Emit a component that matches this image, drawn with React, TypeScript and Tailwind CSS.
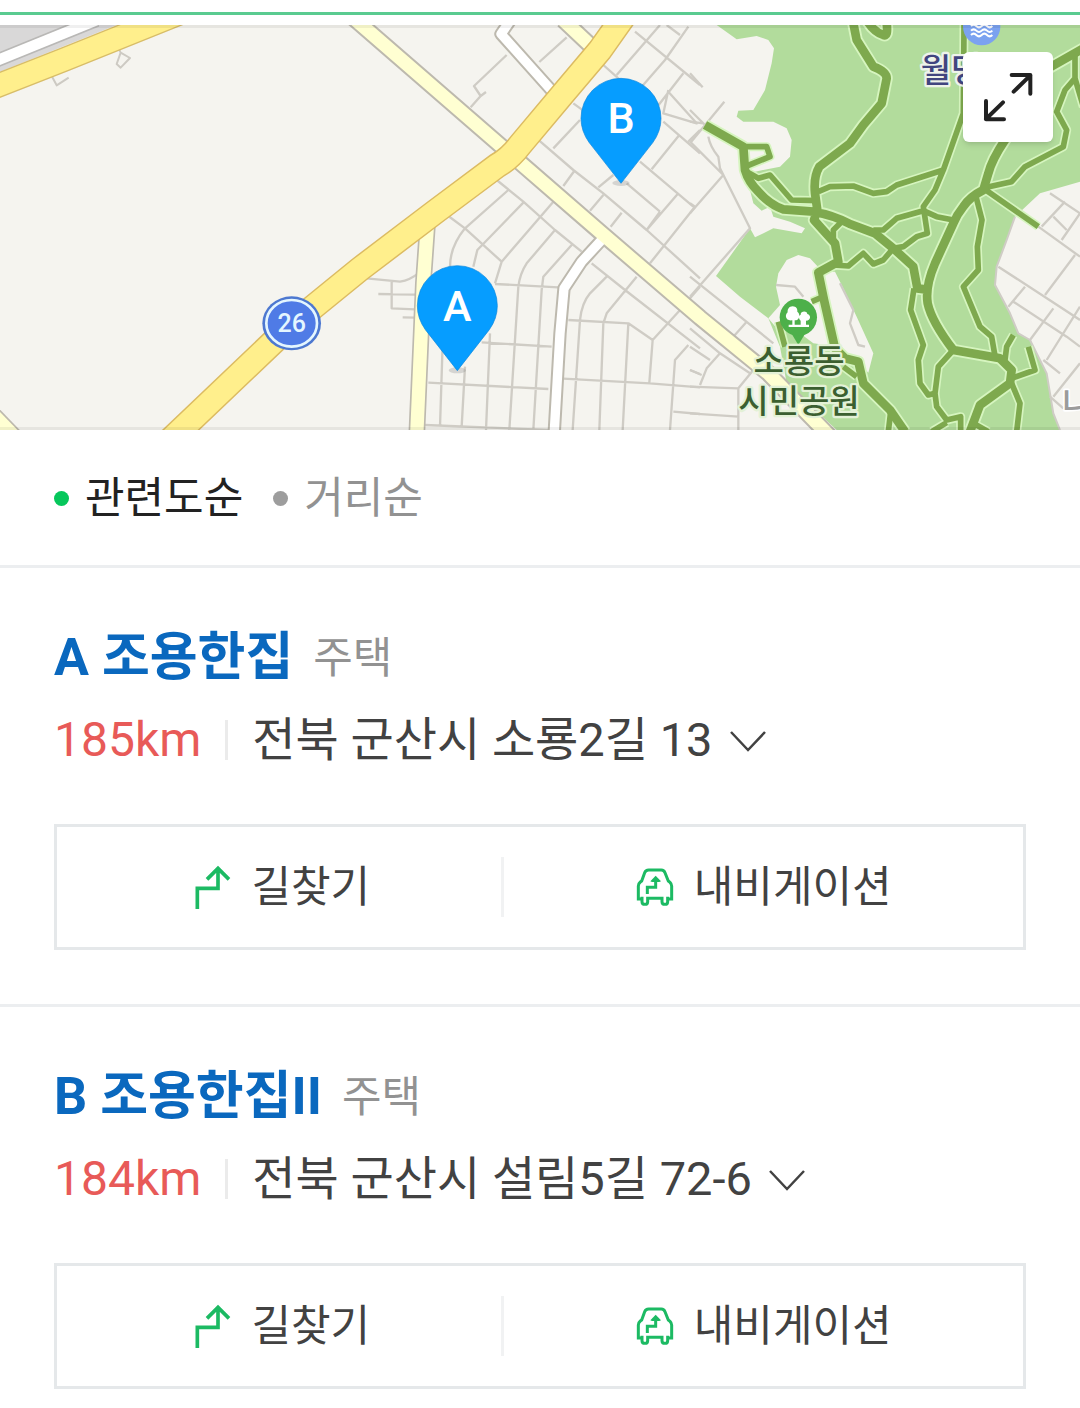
import { useState } from "react";
import clsx from "clsx";

const FONT = "font-['Roboto','Noto_Sans_CJK_KR',sans-serif]";

const PLACES = [
  { mark: "A", name: "조용한집", category: "주택", distance: "185km", address: "전북 군산시 소룡2길 13" },
  { mark: "B", name: "조용한집II", category: "주택", distance: "184km", address: "전북 군산시 설림5길 72-6" },
];

const SORTS = ["관련도순", "거리순"];

// Side streets around the pins
const CENTER_STREETS = `
M500 165L402 258L422 288L438 276M422 288L392 322M680 112L598 186
M790 195L835 235L870 260M700 310L730 332M720 360L640 445M590 415L700 510L790 580L920 690L1080 835
M705 510L670 558M820 525L775 562M790 585L750 632M845 638L812 680M860 550L960 635M960 635L920 690
M960 75L830 225M1045 80L975 180L905 260M885 95L1080 255M980 75L1020 105M1030 220L905 380
M985 270L970 340L1070 370L985 275M970 365L1080 460M1018 405L935 508M900 485L1060 620M1015 580L920 690M1065 620L930 790
M1080 390L1045 425M1080 860L1050 895
M470 540L550 605M505 570L375 685Q330 740 330 800M550 608L412 750L400 800M550 605L645 690L725 755
M640 605L485 785L465 850M645 690L560 790Q540 820 535 860L508 1290M695 735L610 830L605 870L580 1290
M325 648L375 685L485 785M465 852L655 862M450 1000L438 1290M375 1100L365 1280M308 1030L300 1280
M425 1027L635 1040M265 1148L625 1167M255 1275L625 1290
M80 835L180 845Q210 840 235 820M155 845V925L225 928M115 882L225 884M188 952L225 953
M755 790L855 870L1080 1045M800 830L750 880Q725 910 720 960L698 1290M890 830L800 940L790 970L778 1290
M685 960L865 970L938 1020L1025 925M938 1020L928 1148M865 970L848 1290M670 1136L930 1150L1080 1162
M1045 1035L1005 1080L990 1290M1050 1110L1080 1122M1000 1235L1080 1242`;

const PARK_STREETS = `
M0 220L38 262M0 330L45 375M103 305L0 430M0 365L40 370M0 425L100 525L0 640M55 410Q60 440 85 470L90 505L180 685L0 890
M0 610L15 620M0 830L250 1030M170 965L130 1010M0 985L90 1060L180 1120M90 1060L50 1105L30 1155M0 1040L60 1080M0 1110L35 1125
M0 1160L145 1165V1290M0 1240L145 1250M145 1165L190 1110
M1080 580L1170 640M1125 605L1055 680M1170 640L1115 720M1045 680L1170 770M1090 650L1130 690M925 800L1170 960M1155 765L1065 885
M1005 860L955 920M970 905L1130 1010M1090 925L1020 1020M1170 920L1070 1080M1130 1010L1170 1040M1060 1080L1110 1120M1170 1090L1090 1190M1080 1190L1120 1225
M258 855L315 860L340 890M450 850L490 930L480 970L505 1035L525 1040`;

const MAIN_TRAILS = `
M488 60L500 120L550 200Q590 215 590 235L575 310L520 375L480 430L388 500Q370 530 375 580L382 630L372 660L435 730L445 785L385 818L402 900L435 1045
L465 1075L505 1085L520 1150L600 1230L645 1295M530 60Q550 95 580 105Q595 112 590 70
M45 375L160 440L165 510Q175 545 205 575Q240 615 280 628L370 635Q430 645 480 672L555 700L610 745L670 800L682 865L705 868
M1000 340L945 420Q905 480 895 520L880 570Q840 590 820 620Q800 645 790 670L735 790Q705 860 713 910Q725 965 790 1050L930 1075L965 1110L960 1150L870 1215L840 1295
M1180 145L1075 205`;

const SIDE_TRAILS = `
M160 440H230L240 470L170 498M170 515L205 535L240 525L305 600L385 602
M385 575L420 560L490 558L550 580L590 575L620 555L760 510L820 340L822 75
M760 510L735 570L700 620L712 700L680 710L640 740L610 745L580 780L550 792L520 760L475 798L430 795
M700 632L740 650L790 660M700 632L620 655L580 690L550 690M455 665L430 690V720
M858 590L876 660L862 740L865 810L820 860L870 980L905 1010L915 1068M890 572L1045 680
M1155 150L1155 235L1125 270L1100 335L1130 390L1120 440L1005 500L965 545L890 562M1155 235L1180 320
M672 865L662 930L700 1035L685 1080L690 1150L715 1185L735 1180L745 1100L790 1050M735 1180L740 1220L770 1260L812 1250V1295M770 1268L725 1295
M970 1005L950 1040L945 1080M1015 1040L1035 1110L965 1135M965 1150L990 1210L980 1295M602 1235L595 1295M850 1270L895 1295M400 890L365 905
M265 965L285 1040M460 1100L500 1130`;

function Pin({ x, y, label }: { x: number; y: number; label: string }) {
  return (
    <g transform={`translate(${x} ${y})`}>
      <ellipse cy="194" rx="26" ry="9" fill="#8a8a8a" opacity="0.3" />
      <path
        d="M0 195L-96 72Q-120 38 -120 0A120 120 0 0 1 120 0Q120 38 96 72Z"
        fill="#069dff"
        stroke="#0a86dc"
        strokeWidth="2"
      />
      <text y="45" textAnchor="middle" fontSize="129" fontWeight="500" fill="#fff">
        {label}
      </text>
    </g>
  );
}

function MapCanvas() {
  return (
    <svg viewBox="0 75 3240 1215" className={`block w-full h-auto ${FONT}`} role="img" aria-label="지도">
      <rect y="75" width="3240" height="1215" fill="#f5f4ef" />
      <g fill="none" strokeLinejoin="round">
        {/* Top left roads */}
        <path d="M0 75H350L0 215Z" fill="#d9d8d8" />
        <path d="M-20 186L290 60" stroke="#b9b8b6" strokeWidth="42" />
        <path d="M-20 186L290 60" stroke="#fff" strokeWidth="32" />
        <path d="M155 228L170 256L206 233M358 150L362 158L390 174L362 203L350 192L362 158" stroke="#cdcac3" strokeWidth="6" />
        <path d="M-20 262L195 178L560 31" stroke="#d8bd68" strokeWidth="74" />
        <path d="M-20 262L195 178L560 31" stroke="#ffef8c" strokeWidth="66" />
        <path d="M-24 1240L44 1310" stroke="#bdb9ae" strokeWidth="50" />
        <path d="M-24 1240L44 1310" stroke="#ffffd2" strokeWidth="40" />

        <g transform="translate(1020 0)">
          <path d={CENTER_STREETS} stroke="#cfccc5" strokeWidth="7" />
        </g>
      </g>

      {/* Park */}
      <g transform="translate(2070 0)" fill="none" strokeLinejoin="round">
        <path
          d="M80 75L140 118L200 108L235 120L252 145L245 190L225 270L190 330L145 332L140 350L160 365L250 365L290 385L305 420L300 470L270 500L195 515
             L170 530L190 610L215 632L240 620L250 650L300 665L345 685L335 700L250 685L195 712L180 685L78 828L150 890L235 955L270 1040L290 1150L440 1290
             H1110L1090 1240L1070 1120L1020 1020L985 1000L960 940L915 855L920 800L950 720L975 650L1050 580L1170 545V75Z"
          fill="#b2dc9c"
        />
        <path d="M258 860L265 820L290 780L325 765L360 775L388 805L445 1040L370 1030L330 1000L260 985L235 955L270 915Z" fill="#f5f4ef" />
        <path d="M395 815H435L455 855L500 950L550 1060L535 1118L505 1085L440 1040Z" fill="#f5f4ef" />
        <path d={PARK_STREETS} stroke="#cfccc5" strokeWidth="7" />
        <path d="M1110 1290L1090 1240L1070 1120L1020 1020L985 1000L960 940L915 855L920 800L950 720L975 650" stroke="#cfccc5" strokeWidth="6" />
        <path d={SIDE_TRAILS} stroke="#d6f5bf" strokeWidth="27" />
        <path d={MAIN_TRAILS} stroke="#d6f5bf" strokeWidth="37" />
        <path d={SIDE_TRAILS} stroke="#7ea94e" strokeWidth="17" />
        <path d={MAIN_TRAILS} stroke="#7ea94e" strokeWidth="26" />
      </g>

      {/* Wider roads */}
      <g fill="none" strokeLinejoin="round">
        <g stroke="#bdb9ae">
          <path d="M1532 60L1503 102L1655 272" strokeWidth="40" />
          <path d="M1812 712L1745 785L1692 865L1680 1000L1662 1310" strokeWidth="40" />
          <path d="M1282 680L1270 850L1250 1310" strokeWidth="50" />
          <path d="M1690 60L1775 140" strokeWidth="52" />
          <path d="M1050 45L1503 438L1805 700L2100 953L2305 1120L2500 1320" strokeWidth="52" />
        </g>
        <path d="M1532 60L1503 102L1655 272M1816 708L1745 785L1692 865L1680 1000L1662 1310" stroke="#fff" strokeWidth="28" />
        <path d="M1282 680L1270 850L1250 1310M1690 60L1775 140M1050 45L1503 438L1805 700L2100 953L2305 1120L2500 1320" stroke="#ffffd2" strokeWidth="40" />
        <path d="M450 1378L870 978L1080 807L1305 636L1491 497Q1530 475 1560 435L1690 280L1800 150L1885 30" stroke="#dcbb62" strokeWidth="78" />
        <path d="M450 1378L870 978L1080 807L1305 636L1491 497Q1530 475 1560 435L1690 280L1800 150L1885 30" stroke="#ffef8c" strokeWidth="69" />
      </g>

      {/* Route shield */}
      <ellipse cx="875" cy="970" rx="88" ry="81" fill="#4d78d0" />
      <ellipse cx="875" cy="970" rx="76" ry="70" fill="#4f7be6" stroke="#e4f6ff" strokeWidth="8" />
      <text x="875" y="996" textAnchor="middle" fontSize="75" fontWeight="500" fill="#e4f6ff">
        26
      </text>

      {/* Landmarks */}
      <g transform="translate(2070 0)">
        <circle cx="875" cy="80" r="56" fill="#7ba2f0" />
        <path
          d="M843 78q8-8 16 0t16 0t16 0t16 0M843 92q8-8 16 0t16 0t16 0t16 0M843 105q8-8 16 0t16 0t16 0t16 0"
          fill="none"
          stroke="#fff"
          strokeWidth="6"
        />
        <path d="M295 985L325 1035L355 985Z" fill="#4db04a" />
        <circle cx="325" cy="952" r="56" fill="#4db04a" />
        <path
          d="M308 919C319 919 323 928 322 935C332 942 330 961 314 961V974H332V962C325 956 326 947 332 944C331 934 350 930 352 942C364 945 363 962 348 962V974H357V981H296V974H307V961C285 964 284 944 293 937C292 928 297 919 308 919Z"
          fill="#fff"
        />
        <g strokeLinejoin="round" paintOrder="stroke" fontSize="99" fontWeight="500">
          <text x="692" y="246" fill="#41457f" stroke="#eef3ea" strokeWidth="14">
            월명
          </text>
          <g fill="#3b5f30" stroke="#e3f1d6" strokeWidth="14" textAnchor="middle">
            <text x="327" y="1118">소룡동</text>
            <text x="327" y="1238">시민공원</text>
          </g>
          <text x="1117" y="1245" fill="#9b9b9b" stroke="#fff" strokeWidth="10">
            나
          </text>
        </g>
      </g>

      <Pin x={1863} y={355} label="B" />
      <Pin x={1372} y={917} label="A" />
    </svg>
  );
}

function RouteIcon() {
  return (
    <svg viewBox="465 170 111 135" className="w-[37px] h-[45px] shrink-0" fill="none" stroke="#1cba63" strokeWidth="11">
      <path d="M475 302V240H537V180M504 213L537 180L570 213" />
    </svg>
  );
}

function CarIcon() {
  return (
    <svg viewBox="410 175 114 120" className="w-[38px] h-10 shrink-0" fill="none" stroke="#1cba63" strokeWidth="9">
      <path d="M430 271H417V232Q417 225 423 220L427 217L436 192Q439 184 448 184H486Q494 184 497 192L507 217L512 221Q517 226 517 232V271H504" />
      <path d="M428 264V279Q428 287 437 287Q445 287 445 279V264M488 264V279Q488 287 497 287Q505 287 505 279V264M445 269H488" />
      <path d="M444 256V236H469V212" />
      <path d="M469 201L485 218L480 220H458L453 218Z" fill="#1cba63" stroke="none" />
    </svg>
  );
}

function PlaceItem({ place, last }: { place: (typeof PLACES)[number]; last: boolean }) {
  return (
    <li className={clsx("px-[54px] pt-[54px]", last ? "pb-[19px]" : "pb-[54px] border-b-3 border-[#eceef0]")}>
      <div className="flex items-center gap-5">
        <a href="#" className="text-[52px] leading-[72px] font-bold text-[#0a68be]">
          {place.mark} {place.name}
        </a>
        <span className="text-[43px] leading-[72px] text-[#929292]">{place.category}</span>
      </div>

      <div className="flex items-center mt-[14px] leading-[64px]">
        <span className="text-[48px] text-[#e85a58]">{place.distance}</span>
        <span className="w-[3px] h-10 mx-6 bg-[#ebebeb]" />
        <span className="text-[47px] text-[#424242]">{place.address}</span>
        <button type="button" aria-label="주소 더보기" className="ml-4">
          <svg viewBox="0 0 38 24" className="w-[38px] h-6" fill="none" stroke="#424242" strokeWidth="2.5">
            <path d="M2 4L19 22L36 4" />
          </svg>
        </button>
      </div>

      <div className="flex items-center h-[126px] mt-[52px] border-3 border-[#e5e8ea] text-[43px] text-[#424242]">
        <a href="#" className="flex flex-auto items-center justify-center gap-5 pl-1.5">
          <RouteIcon />
          길찾기
        </a>
        <span className="w-[3px] h-15 bg-[#f1f2f3]" />
        <a href="#" className="flex flex-auto items-center justify-center gap-5">
          <CarIcon />
          내비게이션
        </a>
      </div>
    </li>
  );
}

export default function App() {
  const [sort, setSort] = useState(SORTS[0]);

  return (
    <main lang="ko" className={`bg-white overflow-hidden ${FONT}`}>
      {/* Tab underline */}
      <div className="h-[15px] mb-[10px] border-b-3 border-[#5acb90]" />

      {/* Map */}
      <div className="relative">
        <MapCanvas />
        <div className="absolute inset-0 border-y-3 border-black/6 pointer-events-none" />
        <button
          type="button"
          aria-label="지도 크게 보기"
          className="absolute top-[27px] right-[27px] size-[90px] rounded-md bg-white shadow-md"
        >
          <svg
            viewBox="0 0 270 270"
            className="size-full"
            fill="none"
            stroke="#222"
            strokeWidth="12"
            strokeLinecap="round"
            strokeLinejoin="round"
          >
            <path d="M152 119L202 70M146 69H202V125M120 151L69 201M69 147V202H123" />
          </svg>
        </button>
      </div>

      {/* Sort */}
      <div className="flex items-center gap-[30px] h-[138px] px-[54px] pt-0.5 border-b-3 border-[#eceef0]">
        {SORTS.map((name) => (
          <button
            key={name}
            type="button"
            aria-pressed={sort === name}
            onClick={() => setSort(name)}
            className={clsx("flex items-center gap-4 text-[43px]", sort === name ? "text-[#222]" : "text-[#929292]")}
          >
            <span className={clsx("size-[15px] rounded-full", sort === name ? "bg-[#06c75b]" : "bg-[#9d9d9d]")} />
            {name}
          </button>
        ))}
      </div>

      {/* Results */}
      <ul>
        {PLACES.map((place, i) => (
          <PlaceItem key={place.mark} place={place} last={i === PLACES.length - 1} />
        ))}
      </ul>
    </main>
  );
}
